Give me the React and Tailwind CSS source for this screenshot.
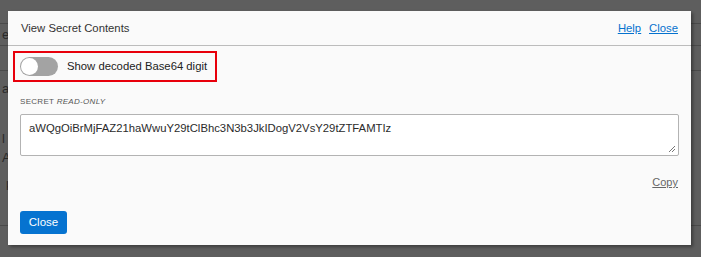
export default function App() {
  return (
    <div className="relative h-[257px] w-[701px] overflow-hidden bg-[#5e5e5e] font-['Liberation_Sans',Arial,sans-serif]">
      {/* page under the overlay */}
      <div className="flex flex-col text-[13px] text-[#2a2a2a]">
        <div className="h-[24px] border-b border-[#4a4a4a]" />
        <div className="h-[22px] border-b border-[#4a4a4a] pl-[2px] leading-[22px]">es</div>
        <div className="h-[25px] border-b border-[#4a4a4a]" />
        <div className="pt-[8px] pl-[2px]">at</div>
        <div className="pt-[30px] pl-[2px]">l</div>
        <div className="pl-[2px]">Ap</div>
        <div className="pt-[8px] pl-[6px]">k</div>
        <div className="mt-[30px] border-b border-[#4a4a4a]" />
      </div>

      <div className="absolute left-[8px] top-[11px] flex h-[234px] w-[683px] flex-col bg-[#fafafa] text-[#333] shadow-[2px_2px_3px_rgba(0,0,0,0.35)]">
        <div className="flex h-[35px] items-center justify-between border-b border-[#bcbcbc] pl-[13px] pr-[13px] pt-[1px] text-[11.3px]">
          <span>View Secret Contents</span>
          <div className="flex gap-[8px] text-[#0572ce] underline">
            <a href="#">Help</a>
            <a href="#">Close</a>
          </div>
        </div>

        <div className="ml-[5px] mt-[5px] flex h-[31px] w-[204px] items-center gap-[9px] border-2 border-[#e8000b] pl-[5px]">
          <div className="flex h-[19px] w-[38px] shrink-0 items-center rounded-full bg-[#a3a3a3] pl-[1px]">
            <div className="h-[17px] w-[17px] rounded-full bg-white" />
          </div>
          <span className="whitespace-nowrap text-[11.3px] text-[#222]">Show decoded Base64 digit</span>
        </div>

        <div className="mt-[14px] pl-[12px] text-[8px] tracking-[0.3px] text-[#555]">
          SECRET <span className="italic">READ-ONLY</span>
        </div>

        <div className="relative mx-[12px] mt-[6px] h-[42px] rounded-[2px] border border-[#b3b3b3] bg-white px-[8px] pt-[5px] text-[11.3px] text-[#2b2b2b]">
          aWQgOiBrMjFAZ21haWwuY29tClBhc3N3b3JkIDogV2VsY29tZTFAMTIz
          <svg className="absolute bottom-[2px] right-[2px]" width="9" height="9" viewBox="0 0 9 9">
            <path d="M8 2 L2 8 M8 5 L5 8" stroke="#777" strokeWidth="1" />
          </svg>
        </div>

        <div className="mr-[13px] mt-[18px] self-end text-[11px] text-[#666] underline">Copy</div>

        <div className="ml-[12px] mt-[18px]">
          <button className="h-[23px] w-[47px] rounded-[3px] bg-[#0673d0] text-[11.5px] text-white">Close</button>
        </div>
      </div>
    </div>
  );
}
